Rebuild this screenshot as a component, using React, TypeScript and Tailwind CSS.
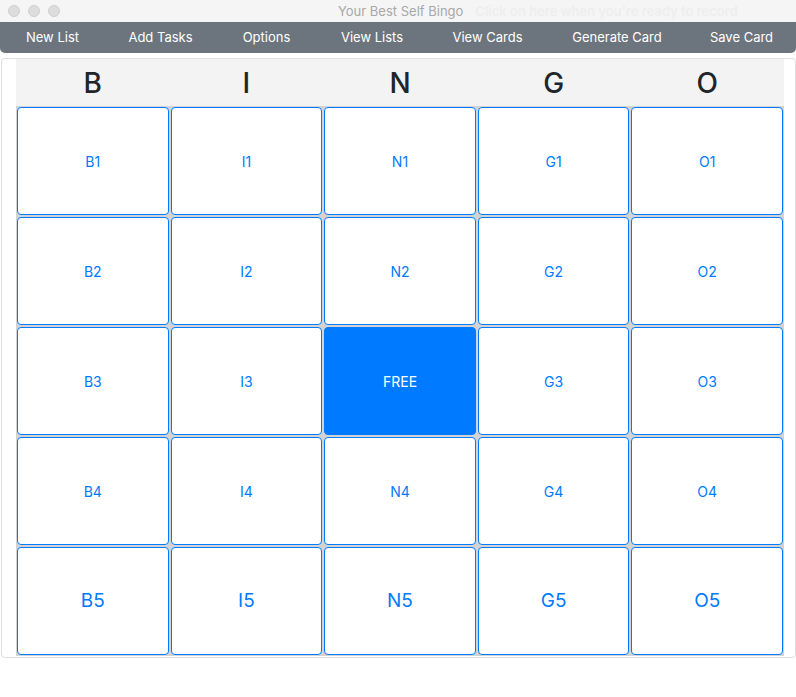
const columns = ["B", "I", "N", "G", "O"]
const menu = [
  { label: "New List", w: "w-[103px]" },
  { label: "Add Tasks", w: "w-[113px]" },
  { label: "Options", w: "w-[99px]" },
  { label: "View Lists", w: "w-[112px]" },
  { label: "View Cards", w: "w-[119px]" },
  { label: "Generate Card", w: "w-[140px]" },
  { label: "Save Card", w: "w-[109px]" },
]

function Cell({ label, big, free }: { label: string; big?: boolean; free?: boolean }) {
  return (
    <div
      className={`flex items-center justify-center rounded-[4px] border border-[#007bff] h-[108px] ${
        free ? "bg-[#007bff] text-white" : "bg-white text-[#007bff]"
      } ${big ? "text-[19px]" : "text-[14px]"}`}
    >
      {label}
    </div>
  )
}

export default function App() {
  return (
    <div className="w-[796px] h-[697px] bg-white font-['Inter','Liberation_Sans',sans-serif] overflow-hidden">
      {/* window title bar */}
      <div className="relative h-[22px] bg-[#f5f5f5] flex items-center">
        <div className="flex gap-[8px] pl-[8px]">
          <span className="w-[12px] h-[12px] rounded-full bg-[#dddddd] border border-[#d0d0d0]" />
          <span className="w-[12px] h-[12px] rounded-full bg-[#dddddd] border border-[#d0d0d0]" />
          <span className="w-[12px] h-[12px] rounded-full bg-[#dddddd] border border-[#d0d0d0]" />
        </div>
        <div className="absolute left-[338px] top-[3px] flex gap-[12px] text-[13px] leading-[16px] whitespace-nowrap">
          <span className="text-[#a8a8a8]">Your Best Self Bingo</span>
          <span className="text-[#eeeeee] font-semibold">Click on here when you're ready to record</span>
        </div>
      </div>

      {/* menu */}
      <div className="h-[31px] bg-[#6c757d] rounded-b-[5px] flex items-center pl-px text-white text-[13px] whitespace-nowrap">
        {menu.map((m) => (
          <span key={m.label} className={`${m.w} shrink-0 text-center`}>
            {m.label}
          </span>
        ))}
      </div>

      {/* card */}
      <div className="mt-[5px] ml-px w-[795px] h-[600px] border border-[#dedede] rounded-[4px] pl-[14px]">
        <div className="w-[768px]">
          <div className="h-[47px] bg-[#f3f3f3] grid grid-cols-5 items-center text-[28px] font-medium text-[#212529]">
            {columns.map((c) => (
              <div key={c} className="text-center">
                {c}
              </div>
            ))}
          </div>
          <div className="grid grid-cols-5 gap-[2px] p-px bg-[#d3d3d3]">
            {[1, 2, 3, 4, 5].map((row) =>
              columns.map((c) => (
                <Cell
                  key={c + row}
                  label={c === "N" && row === 3 ? "FREE" : `${c}${row}`}
                  free={c === "N" && row === 3}
                  big={row === 5}
                />
              ))
            )}
          </div>
        </div>
      </div>
    </div>
  )
}
